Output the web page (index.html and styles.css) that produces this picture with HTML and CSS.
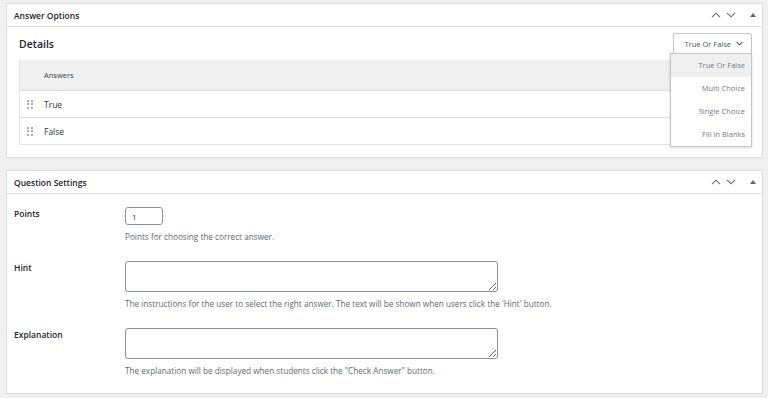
FILE: index.html
```html
<!DOCTYPE html>
<html>
    <head>
        <meta charset="UTF-8">
        <title>Question Editor</title>
        <link rel="stylesheet" href="styles.css">
    </head>
    <body>
        <div class="postbox">
            <div class="postbox_header">
                <h2>Answer Options</h2>
                <div class="handle_actions">
                    <svg class="arrow" width="10" height="6" viewBox="0 0 10 6"><path d="M1 5.2 L5 1.2 L9 5.2" fill="none" stroke="#646970" stroke-width="1.1"/></svg>
                    <svg class="arrow" width="10" height="6" viewBox="0 0 10 6"><path d="M1 0.8 L5 4.8 L9 0.8" fill="none" stroke="#646970" stroke-width="1.1"/></svg>
                    <svg class="toggle" width="6" height="4" viewBox="0 0 6 4"><path d="M0 4 L3 0 L6 4 Z" fill="#646970"/></svg>
                </div>
            </div>
            <div class="answers_body">
                <div class="details_head">
                    <h3>Details</h3>
                    <div class="type_select">
                        <button class="select_btn">True Or False
                            <svg width="7" height="5" viewBox="0 0 7 5"><path d="M0.6 0.8 L3.5 3.8 L6.4 0.8" fill="none" stroke="#50575e" stroke-width="1.1"/></svg>
                        </button>
                        <ul class="select_list">
                            <li class="current">True Or False</li>
                            <li>Multi Choice</li>
                            <li>Single Choice</li>
                            <li>Fill in Blanks</li>
                        </ul>
                    </div>
                </div>
                <div class="answer_table">
                    <div class="answer_head">Answers</div>
                    <div class="answer_row">
                        <span class="drag"><i></i><i></i><i></i><i></i><i></i><i></i></span>
                        True
                    </div>
                    <div class="answer_row">
                        <span class="drag"><i></i><i></i><i></i><i></i><i></i><i></i></span>
                        False
                    </div>
                </div>
            </div>
        </div>

        <div class="postbox">
            <div class="postbox_header">
                <h2>Question Settings</h2>
                <div class="handle_actions">
                    <svg class="arrow" width="10" height="6" viewBox="0 0 10 6"><path d="M1 5.2 L5 1.2 L9 5.2" fill="none" stroke="#646970" stroke-width="1.1"/></svg>
                    <svg class="arrow" width="10" height="6" viewBox="0 0 10 6"><path d="M1 0.8 L5 4.8 L9 0.8" fill="none" stroke="#646970" stroke-width="1.1"/></svg>
                    <svg class="toggle" width="6" height="4" viewBox="0 0 6 4"><path d="M0 4 L3 0 L6 4 Z" fill="#646970"/></svg>
                </div>
            </div>
            <div class="settings_body">
                <div class="field">
                    <label class="field_label">Points</label>
                    <div class="field_input">
                        <input class="points" type="number" value="1">
                        <p class="description">Points for choosing the correct answer.</p>
                    </div>
                </div>
                <div class="field">
                    <label class="field_label">Hint</label>
                    <div class="field_input">
                        <textarea></textarea>
                        <p class="description">The instructions for the user to select the right answer. The text will be shown when users click the 'Hint' button.</p>
                    </div>
                </div>
                <div class="field">
                    <label class="field_label">Explanation</label>
                    <div class="field_input">
                        <textarea></textarea>
                        <p class="description">The explanation will be displayed when students click the "Check Answer" button.</p>
                    </div>
                </div>
            </div>
        </div>
    </body>
</html>
```

FILE: styles.css
```css
body{
    margin: 0;
    padding: 3px 5px 0 6px;
    background-color: #f0f0f1;
    font-family: 'Open Sans', 'Noto Sans', sans-serif;
    color: #1d2327;
}
.postbox{
    background-color: white;
    border: 1px solid #dcdcde;
    margin-bottom: 12px;
}
.postbox_header{
    display: flex;
    align-items: center;
    justify-content: space-between;
    height: 22px;
    border-bottom: 1px solid #dcdcde;
    padding: 0 6px 0 7px;
}
.postbox_header h2{
    margin: 0;
    font-size: 8.5px;
    font-weight: 600;
}
.handle_actions{
    display: flex;
    align-items: center;
    gap: 5px;
}
.handle_actions .toggle{
    margin-left: 9px;
}
.answers_body{
    padding: 6px 10px 12px 12px;
}
.details_head{
    display: flex;
    align-items: center;
    justify-content: space-between;
    height: 21px;
    margin-bottom: 6px;
}
.details_head h3{
    margin: 0;
    font-size: 10.5px;
    font-weight: 600;
}
.type_select{
    position: relative;
    align-self: flex-start;
}
.select_btn{
    display: flex;
    align-items: center;
    gap: 5px;
    height: 21px;
    padding: 0 8px 0 10px;
    background: white;
    border: 1px solid #c3c4c7;
    border-radius: 2px;
    font-family: inherit;
    font-size: 7.5px;
    color: #50575e;
}
.select_list{
    position: absolute;
    top: 20px;
    right: 0;
    width: 80px;
    margin: 0;
    padding: 0;
    list-style: none;
    background: white;
    border: 1px solid #c3c4c7;
    box-shadow: 0 1px 3px rgba(0, 0, 0, 0.15);
    z-index: 2;
}
.select_list li{
    height: 23px;
    line-height: 23px;
    padding-right: 6px;
    text-align: right;
    font-size: 7.5px;
    color: #787c82;
}
.select_list li.current{
    background-color: #f0f0f1;
}
.answer_table{
    border: 1px solid #e4e4e7;
    border-top: none;
}
.answer_head{
    height: 30px;
    line-height: 30px;
    padding-left: 24px;
    background-color: #f0f0f1;
    border-bottom: 1px solid #dcdcde;
    font-size: 7.5px;
    color: #3c434a;
}
.answer_row{
    display: flex;
    align-items: center;
    height: 26px;
    font-size: 8.5px;
    color: #2c3338;
}
.answer_row + .answer_row{
    border-top: 1px solid #dcdcde;
}
.drag{
    display: grid;
    grid-template-columns: 2px 2px;
    gap: 1.5px 2px;
    margin: 0 11px 0 7px;
}
.drag i{
    width: 2px;
    height: 2px;
    border-radius: 50%;
    background-color: #8c8f94;
}
.settings_body{
    padding: 13px 7px 17px;
}
.field{
    display: flex;
    margin-bottom: 19px;
}
.field:last-child{
    margin-bottom: 0;
}
.field_label{
    width: 111px;
    flex-shrink: 0;
    padding-top: 1px;
    font-size: 8.5px;
    font-weight: 600;
    color: #1d2327;
}
.field_input{
    flex: 1;
}
.points{
    display: block;
    box-sizing: border-box;
    width: 38px;
    height: 18px;
    padding: 0 6px;
    border: 1px solid #8c8f94;
    border-radius: 3px;
    font-family: inherit;
    font-size: 8px;
    color: #2c3338;
    -moz-appearance: textfield;
}
.points::-webkit-inner-spin-button{
    -webkit-appearance: none;
}
textarea{
    display: block;
    box-sizing: border-box;
    width: 373px;
    height: 31px;
    border: 1px solid #8c8f94;
    border-radius: 3px;
}
.description{
    margin: 6px 0 0;
    font-size: 8.2px;
    color: #646970;
}
```
